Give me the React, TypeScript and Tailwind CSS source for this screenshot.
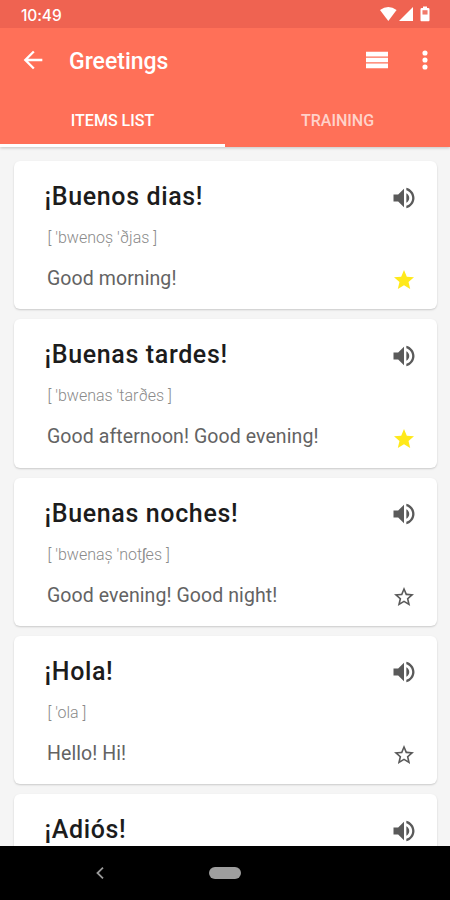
import { ReactNode } from 'react';

interface Phrase {
  title: string;
  ipa?: string;
  translation?: string;
  starred?: boolean;
}

const phrases: Phrase[] = [
  { title: '¡Buenos dias!', ipa: "[ 'bwenoș 'ðjas ]", translation: 'Good morning!', starred: true },
  { title: '¡Buenas tardes!', ipa: "[ 'bwenas 'tarðes ]", translation: 'Good afternoon! Good evening!', starred: true },
  { title: '¡Buenas noches!', ipa: "[ 'bwenaș 'notʃes ]", translation: 'Good evening! Good night!' },
  { title: '¡Hola!', ipa: "[ 'ola ]", translation: 'Hello! Hi!' },
  { title: '¡Adiós!' },
];

function Icon({ className, children }: { className: string; children: ReactNode }) {
  return (
    <svg viewBox="0 0 24 24" fill="currentColor" className={className} aria-hidden="true">
      {children}
    </svg>
  );
}

function StatusBar() {
  return (
    <div className="flex h-7 items-center justify-between bg-[#ef6351] pl-[21px] pr-[19px] text-white">
      <span className="pt-[3px] font-[Inter,sans-serif] text-[15.500px] font-medium leading-none tracking-[-0.100px]">10:49</span>
      <svg viewBox="0 0 52 16" fill="currentColor" className="h-4 w-[52px]" aria-hidden="true">
        <path d="M1 4Q9.300 -2 17.600 4L9.300 15z" />
        <path d="M34 1v14H20z" />
        <path
          fillRule="evenodd"
          d="M44 .5h4V2h1.200q1.300 0 1.300 1.300v11q0 .9-.9.900h-7.200q-.9 0-.9-.9v-11Q41.500 2 42.800 2H44zM43.500 4.300v4.200h5V4.300z"
        />
        <path d="M43.500 4.300h5v4.200h-5z" opacity="0.15" />
      </svg>
    </div>
  );
}

function Header() {
  return (
    <header className="relative z-10 bg-[#ff7058] text-white shadow-[0_1px_3px_rgba(0,0,0,0.2)]">
      <StatusBar />
      <div className="flex h-[67px] items-center pl-[19px] pr-[11px]">
        <Icon className="mb-[3px] size-7">
          <path d="M20 11H7.830l5.590-5.590L12 4l-8 8 8 8 1.410-1.410L7.830 13H20v-2z" />
        </Icon>
        <h1 className="ml-[22px] flex-1 pt-0.5 text-[23px] font-medium">Greetings</h1>
        <svg viewBox="0 0 22 18" fill="currentColor" className="mb-[3px] mr-[23px] h-[18px] w-[22px]" aria-hidden="true">
          <path d="M0 .8h22v4.700H0zM0 6.800h22v4.500H0zM0 12.600h22v4.700H0z" />
        </svg>
        <Icon className="mb-[3px] size-7">
          <circle cx="12" cy="6" r="2.200" />
          <circle cx="12" cy="12" r="2.200" />
          <circle cx="12" cy="18" r="2.200" />
        </Icon>
      </div>
      <nav className="flex h-[52px] text-base font-medium">
        <button className="flex-1 border-b-[3px] border-white pt-0.5">ITEMS LIST</button>
        <button className="flex-1 pb-px text-white/70">TRAINING</button>
      </nav>
    </header>
  );
}

function PhraseCard({ title, ipa, translation, starred }: Phrase) {
  return (
    <li className="flex h-[148.300px] shrink-0 justify-between rounded-md bg-white pl-[30.500px] pr-[19px] shadow-[0_1px_2px_rgba(0,0,0,0.18)]">
      <div className="pt-[21px]">
        <h2 className="text-[25px] font-medium leading-[30px] tracking-[0.640px] text-[#1c1c1c]">{title}</h2>
        {ipa && <p className="ml-[3px] mt-4 text-base font-light leading-5 text-[#8a8a8a]">{ipa}</p>}
        {translation && (
          <p className="ml-[2.500px] mt-[19px] text-[19.500px] leading-6 tracking-[0.080px] text-[#636363]">{translation}</p>
        )}
      </div>
      <div className="flex flex-col items-center justify-between pb-[17px] pt-[22.500px] text-[#5a5a5a]">
        <Icon className="size-7">
          <path d="M3 9v6h4l5 5V4L7 9H3zm13.500 3c0-1.770-1.020-3.290-2.500-4.030v8.050c1.480-.73 2.500-2.250 2.500-4.020zM14 3.230v2.060c2.890.86 5 3.540 5 6.710s-2.110 5.850-5 6.710v2.060c4.010-.91 7-4.490 7-8.770s-2.990-7.860-7-8.770z" />
        </Icon>
        {starred ? (
          <Icon className="size-6 text-[#ffe91a]">
            <path d="M12 17.270L18.180 21l-1.640-7.030L22 9.240l-7.190-.61L12 2 9.190 8.630 2 9.240l5.460 4.730L5.820 21z" />
          </Icon>
        ) : (
          <Icon className="size-6">
            <path d="M22 9.240l-7.190-.62L12 2 9.190 8.630 2 9.240l5.460 4.730L5.820 21 12 17.270 18.180 21l-1.630-7.030L22 9.240zM12 15.400l-3.760 2.270 1-4.280-3.320-2.880 4.380-.38L12 6.100l1.710 4.040 4.380.38-3.320 2.880 1 4.280L12 15.400z" />
          </Icon>
        )}
      </div>
    </li>
  );
}

function NavigationBar() {
  return (
    <footer className="grid h-[54px] shrink-0 grid-cols-[200px_50px_1fr] items-center justify-items-center bg-black text-[#9a9a9a]">
      <svg viewBox="0 0 8 12" fill="none" stroke="currentColor" strokeWidth="1.800" className="h-3 w-2" aria-hidden="true">
        <path d="M7 .7L1.500 6 7 11.300" />
      </svg>
      <span className="h-3 w-8 rounded-full bg-[#9e9e9e]" />
    </footer>
  );
}

export default function App() {
  return (
    <div className="flex h-[900px] w-[450px] flex-col overflow-hidden bg-[#f5f5f5] font-[Roboto,sans-serif]">
      <Header />
      <main className="min-h-0 flex-1 overflow-hidden">
        <ul className="flex flex-col gap-2.5 pl-3.5 pr-[13px] pt-3.5">
          {phrases.map((phrase) => (
            <PhraseCard key={phrase.title} {...phrase} />
          ))}
        </ul>
      </main>
      <NavigationBar />
    </div>
  );
}
